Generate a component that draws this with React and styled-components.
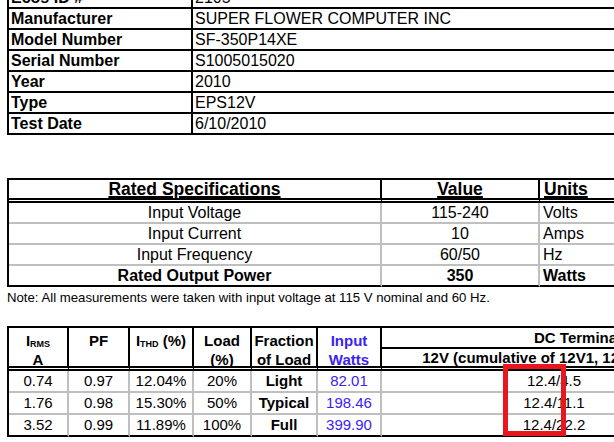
import React from 'react';
import styled, { createGlobalStyle } from 'styled-components';

const GlobalStyle = createGlobalStyle`
  html, body {
    margin: 0;
    padding: 0;
    background: #fff;
  }
  body {
    font-family: "Liberation Sans", Arial, sans-serif;
    color: #000;
    overflow: hidden;
  }
`;

const GRAY = '#bfbfbf';
const BLUE = '#3b22f2';

const Page = styled.div`
  position: relative;
  width: 614px;
  height: 442px;
  overflow: hidden;
  padding-left: 7px;
  box-sizing: border-box;
`;

const InfoGrid = styled.div`
  display: grid;
  grid-template-columns: 184px 460px;
  grid-auto-rows: 21px;
  width: max-content;
  margin-top: -14px;
  border-left: 2px solid #000;
  border-top: 2px solid #000;
`;

const InfoCell = styled.div`
  box-sizing: border-box;
  border-right: 2px solid #000;
  border-bottom: 2px solid #000;
  padding: 0 2px;
  font-size: 16px;
  line-height: 19px;
  font-weight: ${p => (p.$label ? 700 : 400)};
  white-space: nowrap;
  overflow: hidden;
`;

const SpecGrid = styled.div`
  display: grid;
  grid-template-columns: 373px 158px 120px;
  grid-template-rows: 23px repeat(4, 21px);
  width: max-content;
  margin-top: 43px;
  border-left: 2px solid #000;
  border-top: 2px solid #000;
`;

const SpecHead = styled.div`
  box-sizing: border-box;
  border-right: 2px solid #000;
  border-bottom: 5px double #000;
  padding: 0 ${p => (p.$align === 'left' ? '4px' : '0')};
  font-size: 17.5px;
  line-height: 18px;
  font-weight: 700;
  text-decoration: underline;
  text-decoration-thickness: 1.5px;
  text-underline-offset: 1px;
  text-align: ${p => p.$align || 'center'};
  white-space: nowrap;
`;

const SpecCell = styled.div`
  box-sizing: border-box;
  border-right: 2px solid ${GRAY};
  border-bottom: 2px solid ${p => (p.$last ? '#000' : GRAY)};
  padding: 0 ${p => (p.$align === 'left' ? '3px' : '0')};
  font-size: 16px;
  line-height: 19px;
  font-weight: ${p => (p.$bold ? 700 : 400)};
  text-align: ${p => p.$align || 'center'};
  white-space: nowrap;
`;

const Note = styled.p`
  margin: 3px 0 0;
  font-size: 13.2px;
  line-height: 15px;
  white-space: nowrap;
`;

const PerfWrap = styled.div`
  position: relative;
  margin-top: 21px;
`;

const PerfGrid = styled.div`
  display: grid;
  grid-template-columns: 60px 61px 64px 58px 66px 64px 346px 202px;
  grid-template-rows: 21px 22px repeat(3, 22px);
  width: max-content;
  border-left: 2px solid #000;
  border-top: 2px solid #000;
`;

const PerfHead = styled.div`
  box-sizing: border-box;
  grid-row: span ${p => p.$rows || 1};
  grid-column: span ${p => p.$cols || 1};
  border-right: 2px solid #000;
  border-bottom: ${p => (p.$double ? '5px double #000' : '2px solid #000')};
  padding-top: ${p => p.$pad || 0}px;
  font-size: 15px;
  line-height: ${p => p.$lh || 19}px;
  font-weight: 700;
  text-align: center;
  color: ${p => (p.$blue ? BLUE : '#000')};
  white-space: nowrap;
`;

const PerfCell = styled.div`
  box-sizing: border-box;
  border-right: 2px solid ${GRAY};
  border-bottom: 2px solid ${p => (p.$last ? '#000' : GRAY)};
  font-size: 15px;
  line-height: 20px;
  font-weight: ${p => (p.$bold ? 700 : 400)};
  color: ${p => (p.$blue ? BLUE : '#000')};
  text-align: center;
  white-space: nowrap;
`;

const Sub = styled.span`
  font-size: 9px;
  line-height: 0;
  vertical-align: -1px;
`;

const Highlight = styled.div`
  position: absolute;
  left: 496px;
  top: 38px;
  width: 63px;
  height: 72px;
  box-sizing: border-box;
  border: 5px solid #e8161f;
  pointer-events: none;
`;

const info = [
  ['Ecos ID #', '2105'],
  ['Manufacturer', 'SUPER FLOWER COMPUTER INC'],
  ['Model Number', 'SF-350P14XE'],
  ['Serial Number', 'S1005015020'],
  ['Year', '2010'],
  ['Type', 'EPS12V'],
  ['Test Date', '6/10/2010'],
];

const specs = [
  ['Input Voltage', '115-240', 'Volts'],
  ['Input Current', '10', 'Amps'],
  ['Input Frequency', '60/50', 'Hz'],
  ['Rated Output Power', '350', 'Watts'],
];

const results = [
  { irms: '0.74', pf: '0.97', ithd: '12.04%', load: '20%', frac: 'Light', watts: '82.01', v12: '12.4/4.5' },
  { irms: '1.76', pf: '0.98', ithd: '15.30%', load: '50%', frac: 'Typical', watts: '198.46', v12: '12.4/11.1' },
  { irms: '3.52', pf: '0.99', ithd: '11.89%', load: '100%', frac: 'Full', watts: '399.90', v12: '12.4/22.2' },
];

const App = () => {
  return (
    <>
      <GlobalStyle />
      <Page>
        <InfoGrid>
          {info.map(([label, value]) => (
            <React.Fragment key={label}>
              <InfoCell $label>{label}</InfoCell>
              <InfoCell>{value}</InfoCell>
            </React.Fragment>
          ))}
        </InfoGrid>

        <SpecGrid>
          <SpecHead>Rated Specifications</SpecHead>
          <SpecHead>Value</SpecHead>
          <SpecHead $align="left">Units</SpecHead>
          {specs.map(([name, value, unit], i) => {
            const last = i === specs.length - 1;
            return (
              <React.Fragment key={name}>
                <SpecCell $last={last} $bold={last}>{name}</SpecCell>
                <SpecCell $last={last} $bold={last}>{value}</SpecCell>
                <SpecCell $last={last} $bold={last} $align="left">{unit}</SpecCell>
              </React.Fragment>
            );
          })}
        </SpecGrid>

        <Note>Note: All measurements were taken with input voltage at 115 V nominal and 60 Hz.</Note>

        <PerfWrap>
          <PerfGrid>
            <PerfHead $rows={2} $double $pad={3}>I<Sub>RMS</Sub><br />A</PerfHead>
            <PerfHead $rows={2} $double $pad={3}>PF</PerfHead>
            <PerfHead $rows={2} $double $pad={3}>I<Sub>THD</Sub> (%)</PerfHead>
            <PerfHead $rows={2} $double $pad={3}>Load<br />(%)</PerfHead>
            <PerfHead $rows={2} $double $pad={3}>Fraction<br />of Load</PerfHead>
            <PerfHead $rows={2} $double $pad={3} $blue>Input<br />Watts</PerfHead>
            <PerfHead $cols={2}>DC Terminal Voltage/Current (V/A)</PerfHead>
            <PerfHead $double $lh={17}>12V (cumulative of 12V1, 12V2, 12V3)</PerfHead>
            <PerfHead $double $lh={17}>5V</PerfHead>
            {results.map((r, i) => {
              const last = i === results.length - 1;
              return (
                <React.Fragment key={r.irms}>
                  <PerfCell $last={last}>{r.irms}</PerfCell>
                  <PerfCell $last={last}>{r.pf}</PerfCell>
                  <PerfCell $last={last}>{r.ithd}</PerfCell>
                  <PerfCell $last={last}>{r.load}</PerfCell>
                  <PerfCell $last={last} $bold>{r.frac}</PerfCell>
                  <PerfCell $last={last} $blue>{r.watts}</PerfCell>
                  <PerfCell $last={last}>{r.v12}</PerfCell>
                  <PerfCell $last={last}></PerfCell>
                </React.Fragment>
              );
            })}
          </PerfGrid>
          <Highlight />
        </PerfWrap>
      </Page>
    </>
  );
};

export default App;
